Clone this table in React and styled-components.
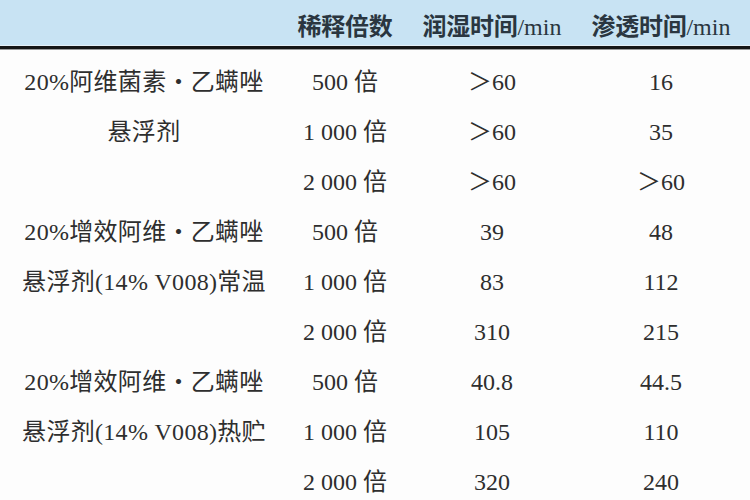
import React from "react";
import styled, { createGlobalStyle } from "styled-components";

const Global = createGlobalStyle`
  html, body { margin: 0; padding: 0; background: #fdfdfd; }
  body { width: 750px; height: 500px; overflow: hidden; }
`;

const FONT = `"Liberation Serif", "Noto Sans CJK SC", serif`;
const COLS = "288px 114px 180px 158px";

const Page = styled.div`
  width: 750px;
  height: 500px;
  overflow: hidden;
  background: #fdfdfd;
  font-family: ${FONT};
  color: #2e2e2e;
`;

const Header = styled.div`
  display: grid;
  grid-template-columns: ${COLS};
  align-items: end;
  height: 46px;
  box-sizing: border-box;
  padding-bottom: 5px;
  background: #c8e3f3;
  border-bottom: 1px solid #e4eff6;
  box-shadow: 0 3px 0 #151515, 0 4px 0 #9a9a9a;
`;

const HeadCell = styled.div`
  text-align: center;
  font-size: 24px;
  line-height: 26px;
  color: #2a3640;
  font-weight: 600;
  white-space: nowrap;
  letter-spacing: -0.3px;
`;

const Unit = styled.span`
  font-weight: 400;
  letter-spacing: 0;
`;

const Body = styled.div`
  display: grid;
  grid-template-columns: ${COLS};
  grid-auto-rows: 50px;
  padding-top: 7px;
  margin-top: 4px;
`;

const Name = styled.div`
  grid-column: 1;
  grid-row: span 3;
  display: flex;
  flex-direction: column;
`;

const NameLine = styled.div`
  height: 50px;
  line-height: 50px;
  text-align: center;
  font-size: 24px;
  white-space: nowrap;
  letter-spacing: 0.3px;
`;

const Cell = styled.div`
  grid-column: ${(p) => p.$col};
  line-height: 50px;
  text-align: center;
  font-size: 24px;
  white-space: nowrap;
`;

const groups = [
  {
    name: ["20%阿维菌素・乙螨唑", "悬浮剂"],
    rows: [
      ["500 倍", "＞60", "16"],
      ["1 000 倍", "＞60", "35"],
      ["2 000 倍", "＞60", "＞60"],
    ],
  },
  {
    name: ["20%增效阿维・乙螨唑", "悬浮剂(14% V008)常温"],
    rows: [
      ["500 倍", "39", "48"],
      ["1 000 倍", "83", "112"],
      ["2 000 倍", "310", "215"],
    ],
  },
  {
    name: ["20%增效阿维・乙螨唑", "悬浮剂(14% V008)热贮"],
    rows: [
      ["500 倍", "40.8", "44.5"],
      ["1 000 倍", "105", "110"],
      ["2 000 倍", "320", "240"],
    ],
  },
];

export default function App() {
  return (
    <Page>
      <Global />
      <Header>
        <HeadCell />
        <HeadCell>稀释倍数</HeadCell>
        <HeadCell>润湿时间<Unit>/min</Unit></HeadCell>
        <HeadCell>渗透时间<Unit>/min</Unit></HeadCell>
      </Header>
      <Body>
        {groups.map((g, gi) => (
          <React.Fragment key={gi}>
            <Name style={{ gridRow: `${gi * 3 + 1} / span 3` }}>
              {g.name.map((l, i) => (
                <NameLine key={i}>{l}</NameLine>
              ))}
            </Name>
            {g.rows.map((r, ri) => (
              <React.Fragment key={ri}>
                <Cell $col={2} style={{ gridRow: gi * 3 + ri + 1 }}>{r[0]}</Cell>
                <Cell $col={3} style={{ gridRow: gi * 3 + ri + 1 }}>{r[1]}</Cell>
                <Cell $col={4} style={{ gridRow: gi * 3 + ri + 1 }}>{r[2]}</Cell>
              </React.Fragment>
            ))}
          </React.Fragment>
        ))}
      </Body>
    </Page>
  );
}
